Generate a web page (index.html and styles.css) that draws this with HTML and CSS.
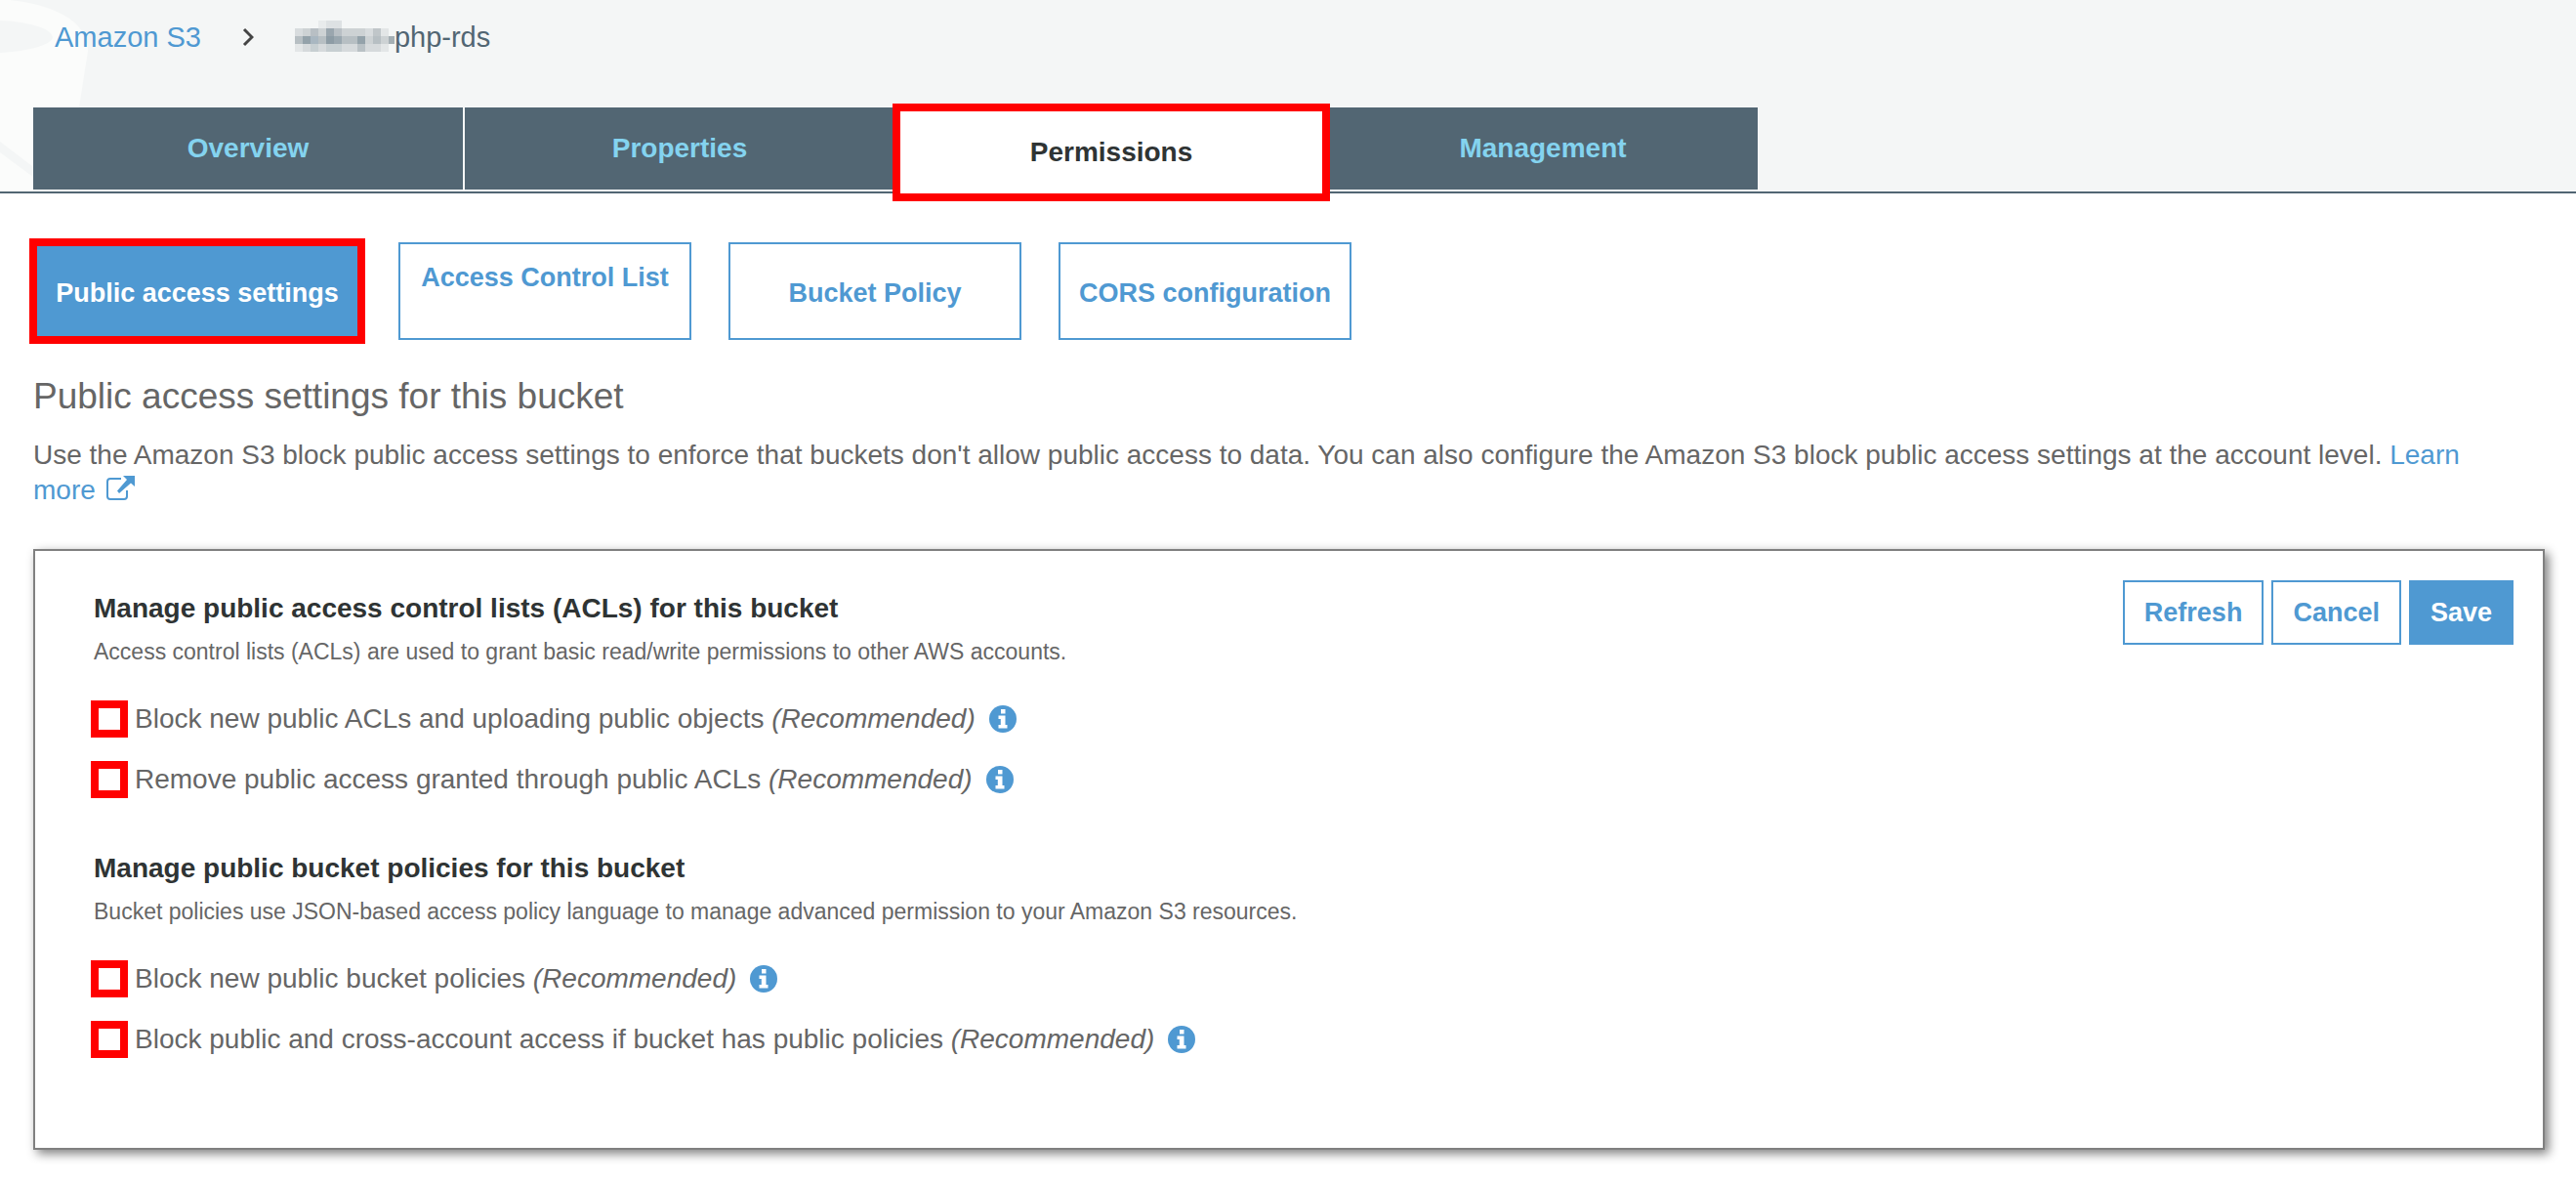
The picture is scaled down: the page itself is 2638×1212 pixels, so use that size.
FILE: index.html
```html
<!DOCTYPE html>
<html lang="en">
<head>
<meta charset="utf-8">
<title>Amazon S3 - Permissions</title>
<link rel="stylesheet" href="styles.css">
</head>
<body>
<svg class="sprite" aria-hidden="true">
  <symbol id="info" viewBox="0 0 28 28">
    <circle cx="14" cy="14" r="14" fill="#4f99d2"/>
    <path d="M12 4h4.500v4.500H12zM9.500 10.500h7V20h2v3.500h-9V20h2.300v-6H9.500z" fill="#fff"/>
  </symbol>
</svg>
<header class="top">
  <svg class="bubbles" viewBox="0 0 110 196" aria-hidden="true">
    <path d="M0 0H10C50 4 91 20 90 52L81 110V196H0Z" fill="#fbfcfb"/>
    <path d="M0 21C26 22 52 28 54 38C54 46 26 53 0 54ZM0 145L50 183V193L0 156Z" fill="#f4f6f6"/>
  </svg>
  <nav class="crumbs" aria-label="Breadcrumb">
    <a href="#">Amazon S3</a>
    <svg class="chevron" viewBox="0 0 12 20" aria-hidden="true"><path d="M2 2l8 8-8 8" fill="none" stroke="#444" stroke-width="3"/></svg>
    <span class="bucket"><svg class="mosaic" viewBox="0 0 102 34" shape-rendering="crispEdges" aria-hidden="true">
      <path d="M24 0h8v8h-8z" fill="#e8ebec"/><path d="M32 0h16v8H32z" fill="#dde1e3"/>
      <path d="M0 8h96v8H0z" fill="#cdd2d4"/><path d="M0 8h8v8H0zM72 8h8v8h-8z" fill="#d8dcde"/><path d="M16 8h8v8h-8zM40 8h8v8h-8z" fill="#b8bfc4"/><path d="M32 8h8v8h-8z" fill="#9aa6ae"/><path d="M80 8h8v8h-8z" fill="#c0c6c9"/><path d="M88 8h8v8h-8z" fill="#e3e6e7"/>
      <path d="M0 16h102v8H0z" fill="#b7bfc3"/><path d="M8 16h8v8H8zM64 16h8v8h-8z" fill="#94a2aa"/><path d="M16 16h8v8h-8z" fill="#a9b7c1"/><path d="M32 16h8v8h-8z" fill="#8d9ca5"/><path d="M40 16h8v8h-8z" fill="#9aa7af"/><path d="M72 16h8v8h-8zM88 16h8v8h-8z" fill="#cdd2d4"/><path d="M96 16h6v8h-6z" fill="#a5afb4"/>
      <path d="M0 24h96v8H0z" fill="#d6dadc"/><path d="M0 24h8v8H0zM88 24h8v8h-8z" fill="#e3e6e7"/><path d="M16 24h8v8h-8zM32 24h16v8H32z" fill="#c7cfd2"/><path d="M64 24h8v8h-8z" fill="#b9c1c5"/>
    </svg>php-rds</span>
  </nav>
  <nav class="tabs" aria-label="Bucket sections">
    <button type="button" class="tab">Overview</button>
    <button type="button" class="tab">Properties</button>
    <button type="button" class="tab current">Permissions</button>
    <button type="button" class="tab">Management</button>
  </nav>
</header>
<main class="content">
  <div class="sections">
    <button type="button" class="section chosen">Public access settings</button>
    <button type="button" class="section raised">Access Control List</button>
    <button type="button" class="section">Bucket Policy</button>
    <button type="button" class="section">CORS configuration</button>
  </div>
  <h1>Public access settings for this bucket</h1>
  <p class="intro">Use the Amazon S3 block public access settings to enforce that buckets don't allow public access to data. You can also configure the Amazon S3 block public access settings at the account level. <a href="#">Learn <span class="together">more <svg class="external" viewBox="0 0 30 26" aria-hidden="true"><path d="M16 3H5Q2 3 2 6V21Q2 24 5 24H19Q22 24 22 21V15" fill="none" stroke="#4f99d2" stroke-width="2"/><path d="M18 0H30V11L26 7.500 14 18 12 15.500 22 4Z" fill="#4f99d2"/></svg></span></a></p>
  <section class="panel">
    <div class="groups">
      <fieldset class="group">
        <legend>Manage public access control lists (ACLs) for this bucket</legend>
        <p class="hint">Access control lists (ACLs) are used to grant basic read/write permissions to other AWS accounts.</p>
        <label class="option"><input type="checkbox"><span>Block new public ACLs and uploading public objects <em>(Recommended)</em></span><svg class="info"><use href="#info"/></svg></label>
        <label class="option"><input type="checkbox"><span>Remove public access granted through public ACLs <em>(Recommended)</em></span><svg class="info"><use href="#info"/></svg></label>
      </fieldset>
      <fieldset class="group">
        <legend>Manage public bucket policies for this bucket</legend>
        <p class="hint">Bucket policies use JSON-based access policy language to manage advanced permission to your Amazon S3 resources.</p>
        <label class="option"><input type="checkbox"><span>Block new public bucket policies <em>(Recommended)</em></span><svg class="info"><use href="#info"/></svg></label>
        <label class="option"><input type="checkbox"><span>Block public and cross-account access if bucket has public policies <em>(Recommended)</em></span><svg class="info"><use href="#info"/></svg></label>
      </fieldset>
    </div>
    <div class="actions">
      <button type="button" class="action">Refresh</button>
      <button type="button" class="action">Cancel</button>
      <button type="button" class="action save">Save</button>
    </div>
  </section>
</main>
</body>
</html>
```
FILE: styles.css
```css
* { box-sizing: border-box; }
body {
  margin: 0;
  background: #fff;
  color: #666;
  font: 28px/36px "Liberation Sans", Arial, sans-serif;
}
button { font: inherit; font-weight: bold; }
a { color: #4f99d2; text-decoration: none; }
.sprite { display: none; }

.top {
  position: relative;
  padding: 20px 34px 2px;
  background: #f4f6f6;
  border-bottom: 2px solid #526673;
}
.bubbles { position: absolute; left: 0; top: 0; width: 110px; height: 196px; }
.crumbs {
  position: relative;
  display: flex;
  align-items: center;
  padding-left: 22px;
  margin-bottom: 54px;
  font-size: 29px;
}
.chevron { width: 12px; height: 20px; margin: 0 42px; }
.bucket { display: flex; align-items: center; color: #526673; }
.mosaic { width: 102px; height: 34px; }
.tabs { position: relative; display: flex; gap: 2px; }
.tab {
  width: 440px;
  height: 84px;
  border: 0;
  background: #526673;
  color: #84d3ef;
}
.tab.current {
  z-index: 1;
  height: 92px;
  margin-bottom: -8px;
  background: #fff;
  color: #2f3434;
  outline: 8px solid #f00;
  outline-offset: -4px;
}

.content { padding: 50px 32px 34px 34px; }
.sections { display: flex; gap: 38px; }
.section {
  width: 300px;
  height: 100px;
  padding: 4px 0 0;
  border: 2px solid #4f99d2;
  background: #fff;
  color: #4f99d2;
  font-size: 27px;
}
.section.raised { padding-bottom: 32px; }
.section.chosen {
  width: 336px;
  background: #4f99d2;
  color: #fff;
  outline: 8px solid #f00;
  outline-offset: -4px;
}
h1 { margin: 36px 0 0; font-size: 37px; line-height: 44px; font-weight: normal; }
.intro { margin: 20px 0 0; }
.together { white-space: nowrap; }
.external { width: 30px; height: 26px; margin-left: 2px; vertical-align: -2px; }

.panel {
  display: flex;
  justify-content: space-between;
  align-items: flex-start;
  margin-top: 42px;
  padding: 30px 30px 80px 60px;
  border: 2px solid #808080;
  box-shadow: 4px 4px 10px #808080;
}
.groups { padding-top: 11px; }
.group { margin: 0; padding: 0; border: 0; }
.group + .group { margin-top: 42px; }
legend { padding: 0; color: #2f3434; font-weight: bold; }
.hint { margin: 8px 0 20px; font-size: 23px; }
.option { display: flex; align-items: center; height: 62px; }
.option input {
  appearance: none;
  width: 38px;
  height: 38px;
  margin: 0 7px 0 -3px;
  border: 8px solid #f00;
  background: #fff;
}
.info { width: 28px; height: 28px; margin-left: 14px; }
.actions { display: flex; gap: 8px; }
.action {
  height: 66px;
  padding: 0 20px;
  border: 2px solid #4f99d2;
  background: #fff;
  color: #4f99d2;
  font-size: 27px;
}
.action.save { background: #4f99d2; color: #fff; }
```
